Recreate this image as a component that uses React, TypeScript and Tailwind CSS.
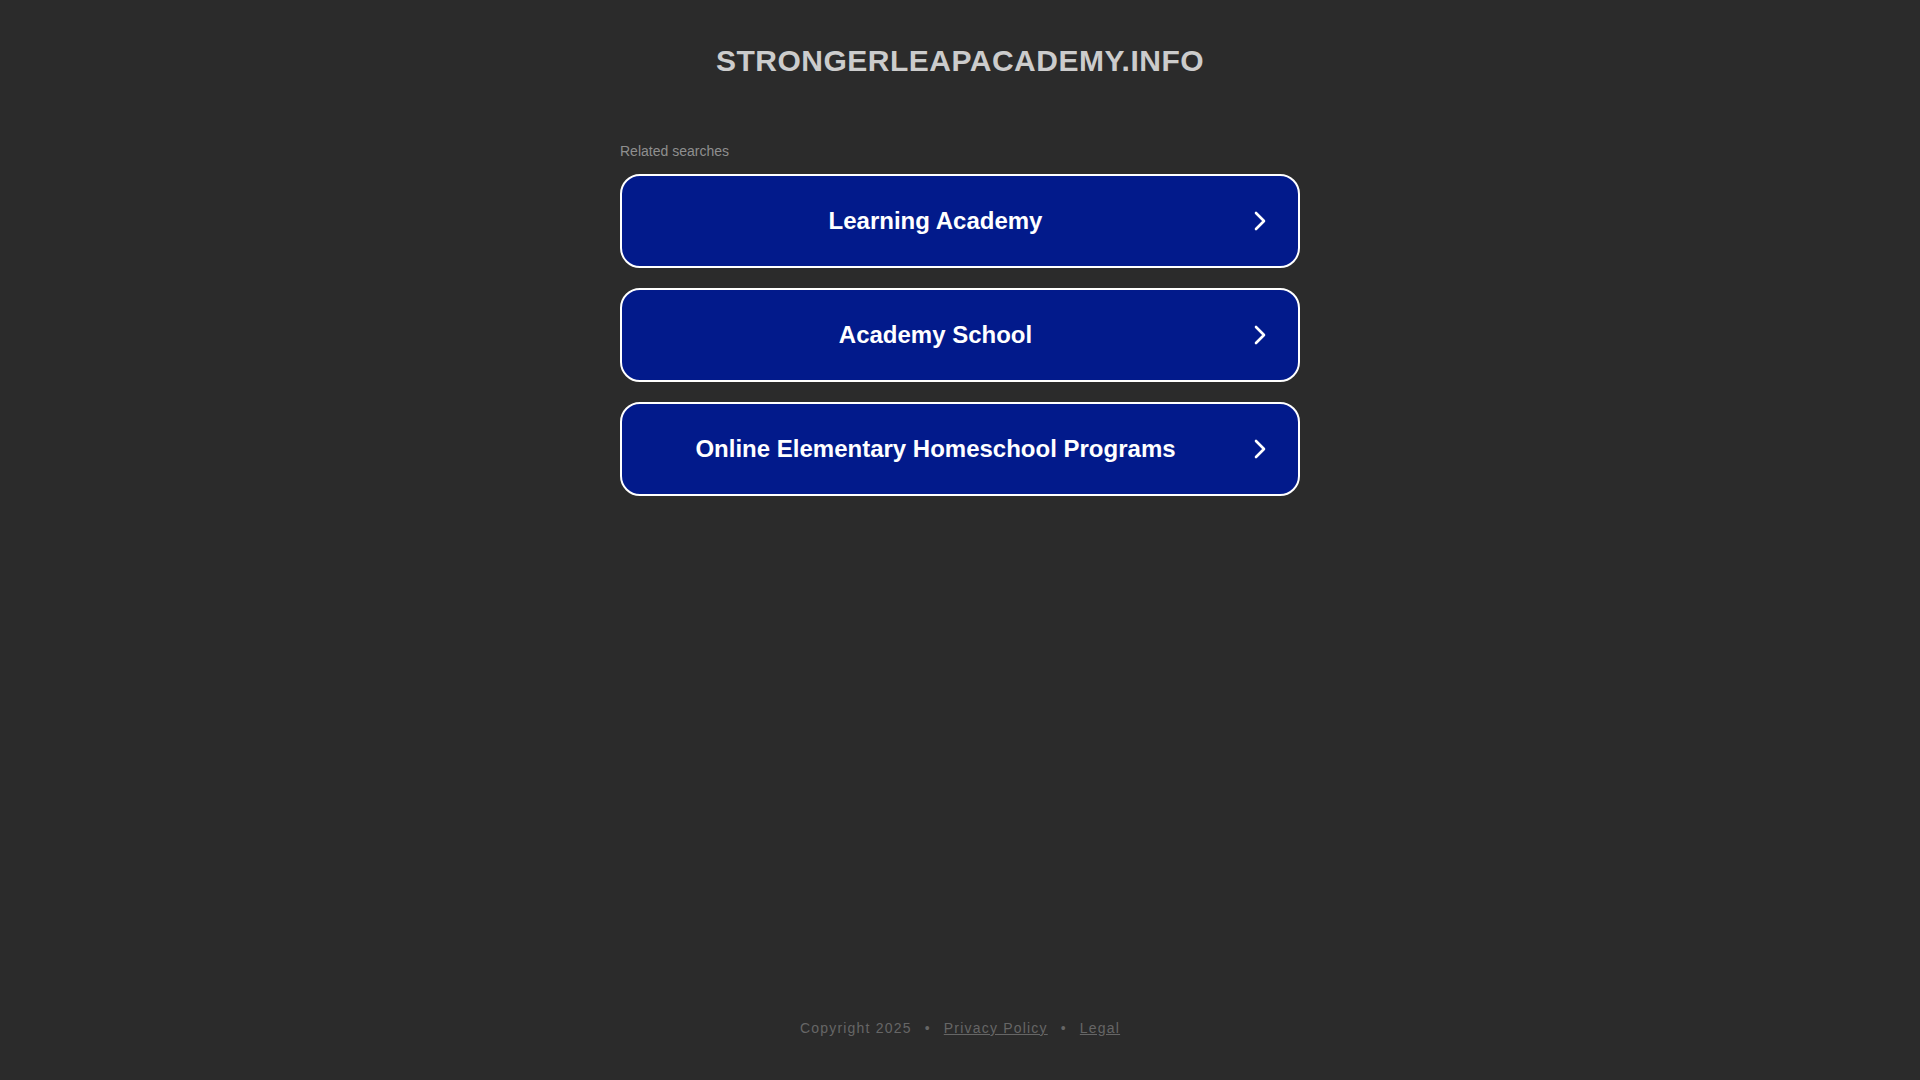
import React from 'react';

const searches = [
  'Learning Academy',
  'Academy School',
  'Online Elementary Homeschool Programs',
];

const Chevron = () => (
  <svg
    width="12"
    height="20"
    viewBox="0 0 12 20"
    fill="none"
    stroke="white"
    strokeWidth="2.6"
    strokeLinecap="round"
    strokeLinejoin="round"
    className="shrink-0"
  >
    <path d="M2 2l8 8-8 8" />
  </svg>
);

export default function App() {
  return (
    <div className="min-h-screen bg-[#2b2b2b] flex flex-col items-center font-['Liberation_Sans',Arial,sans-serif]">
      {/* Header */}
      <h1 className="pt-[43px] text-[30px] leading-[36px] font-bold tracking-[0.5px] text-[#cccccc]">
        STRONGERLEAPACADEMY.INFO
      </h1>

      {/* Related searches */}
      <main className="w-[680px] mt-[62px] flex-1">
        <p className="text-[14px] leading-[20px] text-[#8f8f8f] mb-[13px]">Related searches</p>
        <div className="flex flex-col gap-[20px]">
          {searches.map((s) => (
            <a
              key={s}
              href="#"
              className="flex items-center h-[94px] bg-[#021a8b] border-2 border-white rounded-[20px] pr-[32px]"
            >
              <span className="flex-1 text-center text-white text-[24px] font-bold pr-[5px]">{s}</span>
              <Chevron />
            </a>
          ))}
        </div>
      </main>

      {/* Footer */}
      <footer className="pb-[42px] text-[14px] leading-[20px] tracking-[1.2px] text-[#666666] flex items-center gap-[13px]">
        <span>Copyright 2025</span>
        <span>•</span>
        <a href="#" className="underline">Privacy Policy</a>
        <span>•</span>
        <a href="#" className="underline">Legal</a>
      </footer>
    </div>
  );
}
